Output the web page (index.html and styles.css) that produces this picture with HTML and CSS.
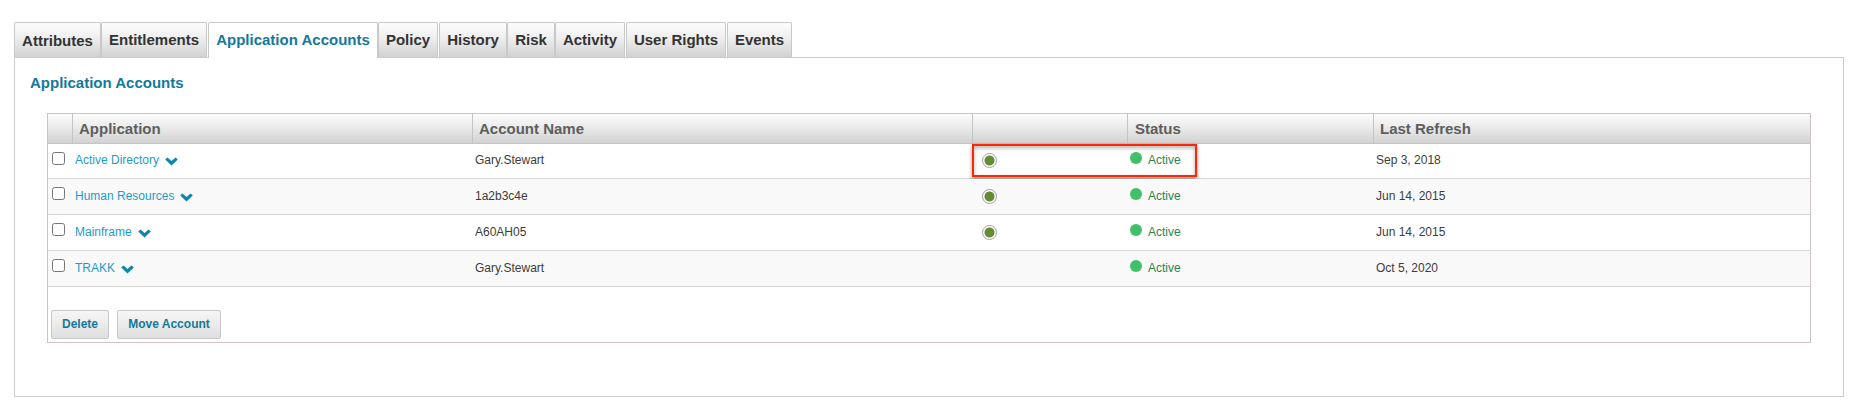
FILE: index.html
```html
<!DOCTYPE html>
<html lang="en">
<head>
<meta charset="utf-8">
<title>Application Accounts</title>
<link rel="stylesheet" href="styles.css">
</head>
<body>
<svg class="defs" width="0" height="0" aria-hidden="true">
  <symbol id="chevron" viewBox="0 0 13 9"><path d="M.2 2.4 2.4.4 6.5 4 10.6.4l2.2 2-6.3 6.2z" fill="#0a87ad"/></symbol>
</svg>
<nav class="tabs">
  <a class="tab attributes">Attributes</a>
  <a class="tab entitlements">Entitlements</a>
  <a class="tab accounts active">Application Accounts</a>
  <a class="tab policy">Policy</a>
  <a class="tab history">History</a>
  <a class="tab risk">Risk</a>
  <a class="tab activity">Activity</a>
  <a class="tab rights">User Rights</a>
  <a class="tab events">Events</a>
</nav>
<main class="panel">
  <h1 class="title">Application Accounts</h1>
  <section class="grid-box">
    <div class="row head">
      <div></div><div>Application</div><div>Account Name</div><div></div><div class="status-head">Status</div><div>Last Refresh</div>
    </div>
    <div class="row first">
      <div class="check"><input type="checkbox"></div>
      <div class="app"><a>Active Directory</a><svg class="chev"><use href="#chevron"/></svg></div>
      <div>Gary.Stewart</div>
      <div><span class="radio"></span></div>
      <div class="status"><span class="dot"></span>Active</div>
      <div>Sep 3, 2018</div>
      <span class="highlight"></span>
    </div>
    <div class="row alt">
      <div class="check"><input type="checkbox"></div>
      <div class="app"><a>Human Resources</a><svg class="chev"><use href="#chevron"/></svg></div>
      <div>1a2b3c4e</div>
      <div><span class="radio"></span></div>
      <div class="status"><span class="dot"></span>Active</div>
      <div>Jun 14, 2015</div>
    </div>
    <div class="row">
      <div class="check"><input type="checkbox"></div>
      <div class="app"><a>Mainframe</a><svg class="chev"><use href="#chevron"/></svg></div>
      <div>A60AH05</div>
      <div><span class="radio"></span></div>
      <div class="status"><span class="dot"></span>Active</div>
      <div>Jun 14, 2015</div>
    </div>
    <div class="row alt">
      <div class="check"><input type="checkbox"></div>
      <div class="app"><a>TRAKK</a><svg class="chev"><use href="#chevron"/></svg></div>
      <div>Gary.Stewart</div>
      <div></div>
      <div class="status"><span class="dot"></span>Active</div>
      <div>Oct 5, 2020</div>
    </div>
    <div class="actions">
      <button class="btn delete">Delete</button>
      <button class="btn move">Move Account</button>
    </div>
  </section>
</main>
</body>
</html>
```
FILE: styles.css
```css
* { box-sizing: border-box; }
body {
  margin: 0;
  padding: 22px 17px 0 14px;
  background: #fff;
  font: 12px/14px "Liberation Sans", Arial, sans-serif;
  color: #3c3c3c;
}
.defs { display: block; }
.tabs { display: flex; height: 35px; }
.tab {
  height: 35px;
  padding-top: 8px;
  border: 1px solid #c8c8c8;
  border-bottom: 0;
  border-radius: 2px 2px 0 0;
  background: linear-gradient(#fcfcfc, #f0f0f0 40%, #d2d2d2);
  font-size: 15px;
  line-height: 18px;
  font-weight: bold;
  text-align: center;
  white-space: nowrap;
  color: #333;
}
.attributes { width: 87px; padding-top: 9px; }
.entitlements { width: 106px; margin-right: 1px; }
.accounts { width: 170px; }
.policy { width: 60px; margin-right: 1px; }
.history { width: 68px; }
.risk { width: 48px; }
.activity { width: 70px; margin-right: 1px; }
.rights { width: 100px; margin-right: 1px; }
.events { width: 65px; }
.tab.active { height: 36px; background: #fff; color: #13799c; z-index: 1; }
.panel { height: 340px; padding: 16px 32px 0; border: 1px solid #ccc; }
.title {
  margin: 0 0 21px -17px;
  font-size: 15px;
  line-height: 18px;
  color: #13799c;
}
.grid-box { height: 230px; border: 1px solid #cbc3c4; border-top-color: #c6c6c6; }
.row {
  position: relative;
  display: grid;
  grid-template-columns: 25px 400px 500px 155px 246px 1fr;
  height: 36px;
  padding-top: 10px;
  border-bottom: 1px solid #d6d6d6;
}
.row > div { padding-left: 2px; }
.row.first { height: 35px; padding-top: 9px; }
.row.alt { background: #f9f9f9; }
.row.head {
  height: 30px;
  padding: 0;
  border-color: #c4c4c4;
  background: linear-gradient(#fcfcfc, #ededed 40%, #d2d2d2);
  font-size: 15px;
  line-height: 30px;
  font-weight: bold;
  color: #5e5e5e;
}
.row.head > div { padding-left: 6px; border-right: 1px solid #c4c4c4; }
.row.head > .status-head { padding-left: 7px; }
.row.head > div:last-child { border-right: 0; }
.row .check { padding-left: 4px; margin-top: -2px; }
.first .check { margin-top: -1px; }
.check input { display: block; width: 13px; height: 13px; margin: 0; }
.app { display: flex; color: #1c9ccb; }
.chev { width: 13px; height: 9px; margin: 4px 0 0 6px; }
.radio {
  display: block;
  width: 15px;
  height: 15px;
  margin-left: 7px;
  border: 1px solid #a0a0a0;
  border-radius: 50%;
  background: radial-gradient(circle, #638c35 4.6px, #fff 5.4px);
}
.status { display: flex; gap: 6px; color: #278451; }
.row .status { padding-left: 2px; }
.dot { width: 12px; height: 12px; margin-top: -1px; border-radius: 50%; background: #40c168; }
.highlight {
  position: absolute;
  left: 924px;
  top: 0;
  width: 225px;
  height: 33px;
  border: 2px solid #ff2600;
  box-shadow: 0 2px 4px rgba(0,0,0,.4), inset 0 2px 4px rgba(0,0,0,.3);
}
.actions { display: flex; gap: 8px; padding: 23px 0 0 3px; }
.btn {
  height: 29px;
  padding: 0 0 2px;
  border: 1px solid #c8c8c8;
  border-radius: 2px;
  background: linear-gradient(#f6f6f6, #dfdfdf);
  font: bold 12px "Liberation Sans", Arial, sans-serif;
  color: #13799c;
}
.delete { width: 58px; }
.move { width: 104px; }
```
